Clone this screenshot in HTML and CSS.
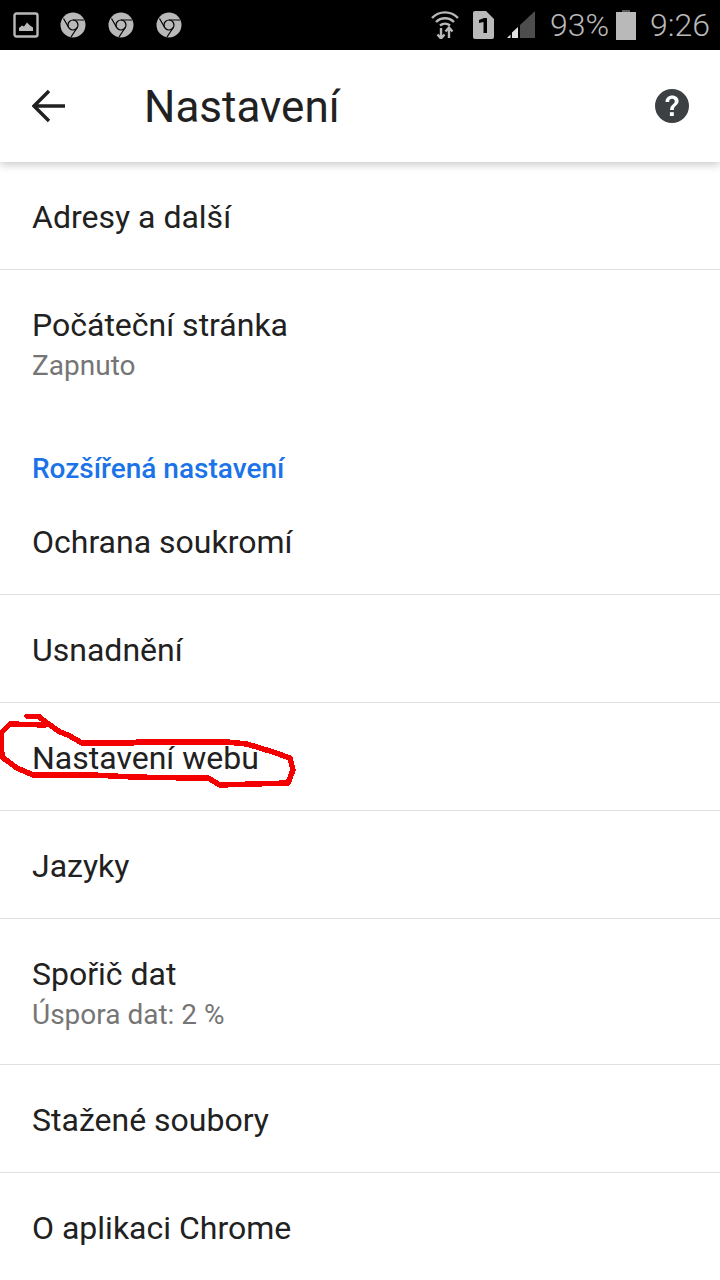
FILE: index.html
```html
<!DOCTYPE html>
<html lang="cs">
<head>
  <meta charset="UTF-8">
  <meta name="viewport" content="width=device-width, initial-scale=1.0">
  <title>Nastavení</title>
  <link rel="stylesheet" href="styles.css">
</head>
<body>
  <div class="statusbar">
    <div class="status-left">
      <svg class="icon-pic" viewBox="0 0 26 26"><rect x="1.500" y="1.500" width="23" height="23" rx="2" fill="none" stroke="#b9b9b9" stroke-width="2.400"/><path d="M6 19v-3l3-2.500 2 1 3-4 3 3 3 2v3.500z" fill="#b9b9b9"/></svg>
      <svg class="icon-chrome" viewBox="0 0 26 26"><use href="#chrome"/></svg>
      <svg class="icon-chrome" viewBox="0 0 26 26"><use href="#chrome"/></svg>
      <svg class="icon-chrome" viewBox="0 0 26 26"><use href="#chrome"/></svg>
    </div>
    <div class="status-right">
      <svg class="icon-wifi" viewBox="0 0 28 28" fill="none" stroke="#b9b9b9" stroke-width="2.400"><path d="M1 7C8-.5 20-.5 27 7"/><path d="M5 11c5-5 13-5 18 0"/><path d="M9 14.500c3-2.500 7-2.500 10 0"/><path d="M10 17v10M6.500 23.500l3.500 4 3.500-4M18 27V16.500M14.500 20.500l3.500-4 3.500 4"/></svg>
      <svg class="icon-sim" viewBox="0 0 22 28"><path d="M3 0h11l8 8v18a2 2 0 0 1-2 2H3a2 2 0 0 1-2-2V2a2 2 0 0 1 2-2z" fill="#b9b9b9"/><path d="M7 9l5-2h3v15h-3.500V11l-4.500 1z" fill="#000"/></svg>
      <svg class="icon-signal" viewBox="0 0 28 28"><path d="M0 27l3.500-3.500V27z" fill="#e2e2e2"/><path d="M5 21.500l6-5.500v11H5z" fill="#e2e2e2"/><path d="M13 14L28 0v27H13z" fill="#4d4d4d"/></svg>
      <span class="status-text">93%</span>
      <svg class="icon-batt" viewBox="0 0 20 30"><path d="M6 0h8v2h6v28H0V2h6z" fill="#b9b9b9"/><path d="M6 0h8v2H6z" fill="#5a5a5a"/></svg>
      <span class="status-text">9:26</span>
    </div>
  </div>

  <svg class="defs" width="0" height="0">
    <symbol id="chrome" viewBox="0 0 26 26">
      <circle cx="13" cy="13" r="12.500" fill="#b9b9b9"/>
      <circle cx="13" cy="13" r="5" fill="none" stroke="#000" stroke-width="1.200"/>
      <path d="M13 8h11M8.700 15.500L3.500 6.500M17.300 15.500L11 25" stroke="#000" stroke-width="1.200" fill="none"/>
    </symbol>
  </svg>

  <header class="toolbar">
    <svg class="icon-back" viewBox="0 0 34 34"><path d="M33 17H3M17 2L2 17l15 15" fill="none" stroke="#212121" stroke-width="3.400"/></svg>
    <div class="toolbar-title">Nastavení</div>
    <svg class="icon-help" viewBox="0 0 34 34"><circle cx="17" cy="17" r="17" fill="#3c4043"/><path d="M10.500 13c0-4 3-6.500 6.700-6.500 3.800 0 6.400 2.300 6.400 5.600 0 4.300-4.800 4.700-4.800 8.900h-3.700c0-5.400 4.700-5.500 4.700-8.700 0-1.300-1-2.500-2.700-2.500-1.800 0-2.900 1.100-3 3.200z" fill="#fff"/><rect x="14.900" y="23.200" width="3.900" height="3.800" fill="#fff"/></svg>
  </header>

  <main class="list">
    <div class="row line">Adresy a další</div>
    <div class="row row-sub">
      <div>Počáteční stránka</div>
      <div class="sub">Zapnuto</div>
    </div>
    <div class="section">Rozšířená nastavení</div>
    <div class="row line">Ochrana soukromí</div>
    <div class="row line">Usnadnění</div>
    <div class="row line">Nastavení webu</div>
    <div class="row line">Jazyky</div>
    <div class="row line row-sub">
      <div>Spořič dat</div>
      <div class="sub">Úspora dat: 2 %</div>
    </div>
    <div class="row line">Stažené soubory</div>
    <div class="row">O aplikaci Chrome</div>
  </main>

  <svg class="scribble" viewBox="0 0 300 80"><path d="M27 2H38L47 9 60 18 68 21 82 29 133 29 137 28 227 28 247 30 273 38 290 44 293 56 288 69 220 71 208 64 190 64 133 63 93 61 33 61 17 54 2 43 1 19 10 10 45 11" fill="none" stroke="#f50000" stroke-width="5.500" stroke-linejoin="round" stroke-linecap="round" shape-rendering="crispEdges"/></svg>
</body>
</html>
```

FILE: styles.css
```css
* {
  box-sizing: border-box;
}
html, body {
  height: 1280px;
  overflow: hidden;
}
body {
  margin: 0;
  position: relative;
  font-family: Roboto, "Liberation Sans", sans-serif;
  background: #fff;
  color: #212121;
}
.defs {
  position: absolute;
}
.statusbar {
  height: 50px;
  background: #000;
  display: flex;
  justify-content: space-between;
  align-items: center;
  padding: 0 10px 0 13px;
}
.status-left, .status-right {
  display: flex;
  align-items: center;
}
.icon-pic {
  width: 26px;
  height: 26px;
  margin-right: 21px;
}
.icon-chrome {
  width: 26px;
  height: 26px;
  margin-right: 22px;
}
.icon-wifi {
  width: 28px;
  height: 28px;
  margin-right: 13px;
}
.icon-sim {
  width: 22px;
  height: 28px;
  margin-right: 13px;
}
.icon-signal {
  width: 28px;
  height: 28px;
  margin-right: 15px;
}
.icon-batt {
  width: 20px;
  height: 30px;
  margin: 0 14px 0 7px;
}
.status-text {
  font-size: 32px;
  font-weight: 300;
  color: #b9b9b9;
}
.toolbar {
  height: 112px;
  display: flex;
  align-items: center;
  padding: 0 31px 0 32px;
  background: #fff;
  box-shadow: 0 3px 8px rgba(0,0,0,0.2);
  position: relative;
}
.icon-back {
  width: 34px;
  height: 34px;
}
.toolbar-title {
  font-size: 44px;
  margin-left: 78px;
  padding-top: 2px;
  flex: 1;
}
.icon-help {
  width: 34px;
  height: 34px;
}
.row {
  height: 108px;
  padding: 2px 32px 0;
  display: flex;
  flex-direction: column;
  justify-content: center;
  font-size: 32px;
  color: #212121;
}
.line {
  border-bottom: 1px solid #e0e0e0;
}
.row-sub {
  justify-content: flex-start;
  padding-top: 36px;
  height: 146px;
  line-height: 38px;
}
.sub {
  font-size: 28px;
  line-height: 44px;
  color: #757575;
}
.section {
  height: 71px;
  padding: 36px 32px 0;
  font-size: 28px;
  font-weight: 500;
  color: #1a73e8;
}
.scribble {
  position: absolute;
  left: 0;
  top: 714px;
  width: 300px;
  height: 80px;
}
```
